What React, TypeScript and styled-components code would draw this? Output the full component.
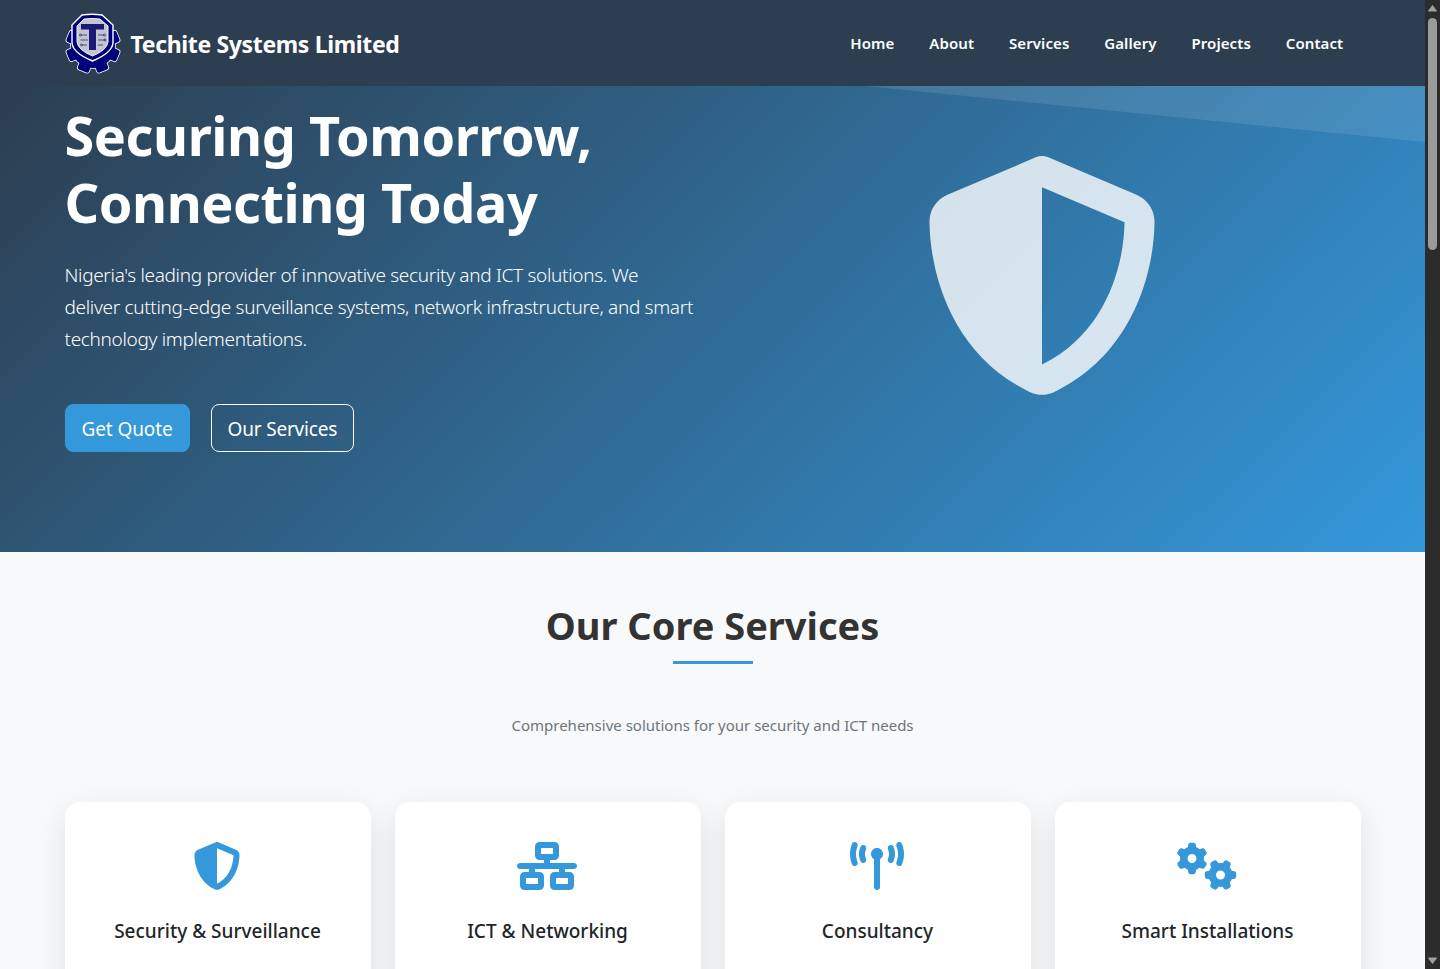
import React from "react";
import styled, { createGlobalStyle } from "styled-components";
import { FaShieldHalved, FaNetworkWired, FaTowerBroadcast, FaGears } from "react-icons/fa6";

const Global = createGlobalStyle`
  html, body { height: 100%; }
  body { margin: 0; font-family: "Noto Sans", "Open Sans", sans-serif; color: #212529; background: #fff; overflow: hidden; }
  #root { height: 100%; }
  * { box-sizing: border-box; }
`;

const Shell = styled.div`
  display: flex;
  height: 100%;
`;

const Main = styled.main`
  flex: 1;
  min-width: 0;
  overflow-y: auto;
  scrollbar-width: none;
`;

const Rail = styled.div`
  flex: none;
  width: 15px;
  display: flex;
  flex-direction: column;
  align-items: center;
  background: #2c2c2c;
`;

const RailArrow = styled.svg`
  flex: none;
  width: 15px;
  height: 17px;
  fill: #a0a0a0;
  stroke: #a0a0a0;
  stroke-linejoin: round;
`;

const RailTrack = styled.div`
  flex: 1;
  width: 100%;
  padding: 1px 3px 0;
`;

const RailThumb = styled.div`
  height: 232px;
  border-radius: 5px;
  background: #9b9b9b;
`;

const Container = styled.div`
  width: 1320px;
  margin: 0 auto;
  padding: 0 12px;
`;

const Header = styled.header`
  height: 86px;
  background: #2c3e50;
`;

const HeaderInner = styled(Container)`
  height: 100%;
  display: flex;
  align-items: center;
  justify-content: space-between;
`;

const Brand = styled.a`
  display: flex;
  align-items: center;
  gap: 9px;
  color: #fff;
  font-size: 23px;
  line-height: 31px;
  font-weight: 700;
  letter-spacing: -0.35px;
`;

const BrandName = styled.span`
  padding-top: 2px;
`;

const Nav = styled.nav`
  display: flex;
  gap: 2.8px;
  padding-right: 1.2px;
`;

const NavLink = styled.a`
  padding: 8px 16px;
  color: #fff;
  font-size: 15px;
  line-height: 24px;
  font-weight: 600;
  letter-spacing: 0.1px;
`;

const Hero = styled.section`
  position: relative;
  height: 466px;
  background: linear-gradient(135deg, #2c3e50 0%, #3498db 100%);
  overflow: hidden;
  &::before {
    content: "";
    position: absolute;
    inset: 0;
    background: rgba(255, 255, 255, 0.1);
    clip-path: polygon(865px 0, 100% 0, 100% 56px);
  }
`;

const HeroInner = styled(Container)`
  position: relative;
  display: grid;
  grid-template-columns: 1fr 1fr;
  column-gap: 24px;
`;

const HeroText = styled.div`
  padding-top: 16px;
`;

const HeroTitle = styled.h1`
  margin: 0 0 23px;
  color: #fff;
  font-size: 54px;
  line-height: 67.2px;
  font-weight: 700;
  letter-spacing: -0.45px;
`;

const Lead = styled.p`
  margin: 0 0 49px;
  max-width: 631px;
  color: #fff;
  font-size: 19px;
  line-height: 32px;
  font-weight: 300;
  letter-spacing: -0.32px;
`;

const Actions = styled.div`
  display: flex;
  gap: 21px;
`;

const Button = styled.a<{ $outline?: boolean }>`
  display: flex;
  align-items: center;
  height: 48px;
  padding: 2px 16px 0;
  border-radius: 8px;
  color: #fff;
  font-size: 19px;
  letter-spacing: ${(p) => (p.$outline ? "-0.2px" : "-0.1px")};
  background: ${(p) => (p.$outline ? "transparent" : "#3498db")};
  border: 1px solid ${(p) => (p.$outline ? "#fff" : "#3498db")};
`;

const HeroArt = styled.div`
  display: flex;
  justify-content: center;
  padding: 70px 1px 0 0;
  color: rgba(255, 255, 255, 0.8);
  font-size: 240px;
  line-height: 0;
`;

const Services = styled.section`
  background: #f8f9fa;
  padding: 49px 0 64px;
`;

const SectionHead = styled.div`
  text-align: center;
`;

const SectionTitle = styled.h2`
  position: relative;
  margin: 0;
  padding-bottom: 15px;
  font-size: 38px;
  line-height: 48px;
  font-weight: 700;
  color: #333;
  &::after {
    content: "";
    position: absolute;
    left: 50%;
    bottom: 0;
    width: 80px;
    height: 3px;
    margin-left: -40px;
    background: #3498db;
  }
`;

const SectionSub = styled.p`
  margin: 49px 0 65px;
  color: #6c757d;
  font-size: 15px;
  line-height: 24px;
`;

const Cards = styled.div`
  display: grid;
  grid-template-columns: repeat(4, 1fr);
  gap: 24px;
`;

const Card = styled.article`
  background: #fff;
  border-radius: 15px;
  box-shadow: 0 10px 30px rgba(0, 0, 0, 0.1);
  padding: 40px 24px 32px;
  text-align: center;
`;

const CardIcon = styled.div<{ $width: number }>`
  color: #3498db;
  line-height: 0;
  margin-bottom: 24px;
  padding-right: 1px;
  display: flex;
  justify-content: center;
  svg {
    height: 48px;
    width: ${(p) => p.$width}px;
  }
`;

const CardTitle = styled.h3`
  margin: 0 0 16px;
  font-size: 19px;
  line-height: 34px;
  font-weight: 500;
  color: #212529;
`;

const CardText = styled.p`
  margin: 0;
  color: #6c757d;
  font-size: 15px;
  line-height: 24px;
`;

const Footer = styled.footer`
  background: #2c3e50;
  color: #fff;
  padding: 48px 0;
  text-align: center;
`;

const gearAngles = [0, 45, 90, 135, 180, 225, 270, 315];

function GearShape() {
  return (
    <>
      <circle cx="28" cy="33" r="22" />
      {gearAngles.map((a) => (
        <rect key={a} x="22" y="6" width="12" height="9" rx="2" transform={`rotate(${a + 22.5} 28 33)`} />
      ))}
    </>
  );
}

const shieldOuter = "M7 12 L17 2 Q27 0.5 37 2 L48 12 V30 Q47 40 27.5 48 Q8 40 7 30 Z";

function Logo() {
  return (
    <svg width="57" height="61" viewBox="0 0 57 61" aria-hidden="true">
      <g fill="#fff" stroke="#fff" strokeWidth="1.6">
        <GearShape />
      </g>
      <g fill="#00007a">
        <GearShape />
      </g>
      <path d={shieldOuter} fill="#00007a" stroke="#fff" strokeWidth="1.4" />
      <path d="M12 13 L19 6 Q27 5 35 6 L43 13 V29 Q42 37 27.5 43 Q13 37 12 29 Z" fill="#c3c6ce" stroke="#f2f2f4" strokeWidth="1" />
      <path d="M16 11 H39 V16.5 H31 V37 H24 V16.5 H16 Z" fill="#1a1a78" />
      <g stroke="#23307f" strokeWidth="0.8" fill="none">
        <path d="M16 22 H22 M15.5 27 H23 M17 32 H22 M33 22 H39 M33 27 H40 M33 32 H38" />
        <circle cx="15.5" cy="22" r="1" />
        <circle cx="39.5" cy="22" r="1" />
        <circle cx="40" cy="27" r="1" />
        <circle cx="16.5" cy="32" r="1" />
      </g>
    </svg>
  );
}

const services = [
  { icon: <FaShieldHalved />, width: 48, title: "Security & Surveillance", text: "Comprehensive security solutions including CCTV, access control and alarm systems." },
  { icon: <FaNetworkWired />, width: 60, title: "ICT & Networking", text: "Complete ICT infrastructure setup, structured cabling and network management." },
  { icon: <FaTowerBroadcast />, width: 54, title: "Consultancy", text: "Professional consultancy services for technology planning and implementation." },
  { icon: <FaGears />, width: 60, title: "Smart Installations", text: "Smart home and office automation solutions for modern living and work." },
];

const links = ["Home", "About", "Services", "Gallery", "Projects", "Contact"];

export default function App() {
  return (
    <Shell>
      <Global />
      <Main>
        <Header>
          <HeaderInner>
            <Brand>
              <Logo />
              <BrandName>Techite Systems Limited</BrandName>
            </Brand>
            <Nav>
              {links.map((l) => (
                <NavLink key={l}>{l}</NavLink>
              ))}
            </Nav>
          </HeaderInner>
        </Header>
        <Hero>
          <HeroInner>
            <HeroText>
              <HeroTitle>
                Securing Tomorrow,
                <br />
                Connecting Today
              </HeroTitle>
              <Lead>
                Nigeria's leading provider of innovative security and ICT solutions. We deliver cutting-edge surveillance systems, network infrastructure, and smart technology implementations.
              </Lead>
              <Actions>
                <Button>Get Quote</Button>
                <Button $outline>Our Services</Button>
              </Actions>
            </HeroText>
            <HeroArt>
              <FaShieldHalved />
            </HeroArt>
          </HeroInner>
        </Hero>
        <Services>
          <Container>
            <SectionHead>
              <SectionTitle>Our Core Services</SectionTitle>
              <SectionSub>Comprehensive solutions for your security and ICT needs</SectionSub>
            </SectionHead>
            <Cards>
              {services.map((s) => (
                <Card key={s.title}>
                  <CardIcon $width={s.width}>{s.icon}</CardIcon>
                  <CardTitle>{s.title}</CardTitle>
                  <CardText>{s.text}</CardText>
                </Card>
              ))}
            </Cards>
          </Container>
        </Services>
        <Footer>© Techite Systems Limited. All rights reserved.</Footer>
      </Main>
      <Rail>
        <RailArrow viewBox="0 0 15 17">
          <path d="M7.5 5.5 L11.5 11 H3.5 Z" />
        </RailArrow>
        <RailTrack>
          <RailThumb />
        </RailTrack>
        <RailArrow viewBox="0 0 15 17">
          <path d="M7.5 11.5 L11.5 6 H3.5 Z" />
        </RailArrow>
      </Rail>
    </Shell>
  );
}
